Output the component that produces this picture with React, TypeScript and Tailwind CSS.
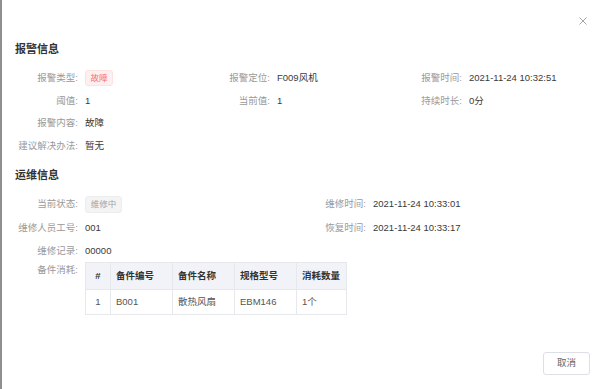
import React from "react";

interface Field {
  label: string;
  value: React.ReactNode;
}

const font = { fontFamily: '"Liberation Sans", Arial, "Noto Sans CJK SC", sans-serif' };

const FaultTag = () => (
  <span className="inline-flex h-[16px] w-[28px] items-center justify-center rounded-[3px] border border-[#fde2e2] bg-[#fef0f0] text-[8.5px] text-[#f56c6c]">
    故障
  </span>
);

const StatusTag = () => (
  <span className="inline-flex h-[17px] w-[37px] items-center justify-center rounded-[3px] border border-[#ebedf0] bg-[#f4f4f5] text-[8.5px] text-[#a0a3a8]">
    维修中
  </span>
);

const FieldCell = ({ label, value }: Field) => (
  <div className="flex items-center">
    <span className="w-[63px] shrink-0 whitespace-nowrap text-right text-[#9a9a9a]">{label}:</span>
    <span className="ml-[7px] whitespace-nowrap text-[#3a3a3a]">{value}</span>
  </div>
);

const parts = [
  { no: "1", code: "B001", name: "散热风扇", spec: "EBM146", qty: "1个" },
];

const PartsTable = () => (
  <table className="border-collapse text-[9.5px]">
    <thead>
      <tr className="h-[27px] bg-[#f1f3f8] text-[#333]">
        <th className="w-[25px] border border-[#e6e8ec] text-center font-bold">#</th>
        <th className="w-[62px] border border-[#e6e8ec] pl-[5px] text-left font-bold">备件编号</th>
        <th className="w-[62px] border border-[#e6e8ec] pl-[5px] text-left font-bold">备件名称</th>
        <th className="w-[62px] border border-[#e6e8ec] pl-[5px] text-left font-bold">规格型号</th>
        <th className="w-[50px] border border-[#e6e8ec] pl-[5px] text-left font-bold">消耗数量</th>
      </tr>
    </thead>
    <tbody>
      {parts.map((p) => (
        <tr key={p.no} className="h-[25px] text-[#555]">
          <td className="border border-[#e6e8ec] text-center">{p.no}</td>
          <td className="border border-[#e6e8ec] pl-[5px]">{p.code}</td>
          <td className="border border-[#e6e8ec] pl-[5px]">{p.name}</td>
          <td className="border border-[#e6e8ec] pl-[5px]">{p.spec}</td>
          <td className="border border-[#e6e8ec] pl-[5px]">{p.qty}</td>
        </tr>
      ))}
    </tbody>
  </table>
);

export default function App() {
  return (
    <div className="flex h-[389px] w-[600px] bg-white text-[9.5px]" style={font}>
      <div className="w-[2px] shrink-0 bg-[#8f8f8f]" />
      <div className="relative flex flex-1 flex-col pl-[13px]">
        {/* close */}
        <button className="absolute right-[13px] top-[16px] flex h-[9px] w-[9px] items-center justify-center">
          <svg width="8" height="8" viewBox="0 0 8 8" fill="none" stroke="#a6a6a6" strokeWidth="1">
            <path d="M0.5 0.5 L7.5 7.5 M7.5 0.5 L0.5 7.5" />
          </svg>
        </button>

        {/* 报警信息 */}
        <h2 className="mt-[41px] h-[16px] text-[11px] font-bold leading-[16px] text-[#333]">报警信息</h2>
        <div className="mt-[9px] grid w-[576px] grid-cols-3">
          <div className="flex h-[24px] items-center"><FieldCell label="报警类型" value={<FaultTag />} /></div>
          <div className="flex h-[24px] items-center"><FieldCell label="报警定位" value="F009风机" /></div>
          <div className="flex h-[24px] items-center"><FieldCell label="报警时间" value="2021-11-24 10:32:51" /></div>
          <div className="flex h-[22px] items-center"><FieldCell label="阈值" value="1" /></div>
          <div className="flex h-[22px] items-center"><FieldCell label="当前值" value="1" /></div>
          <div className="flex h-[22px] items-center"><FieldCell label="持续时长" value="0分" /></div>
          <div className="col-span-3 flex h-[23px] items-center"><FieldCell label="报警内容" value="故障" /></div>
          <div className="col-span-3 flex h-[23px] items-center"><FieldCell label="建议解决办法" value="暂无" /></div>
        </div>

        {/* 运维信息 */}
        <h2 className="mt-[9px] h-[16px] text-[11px] font-bold leading-[16px] text-[#333]">运维信息</h2>
        <div className="mt-[9px] grid w-[576px] grid-cols-2">
          <div className="flex h-[24px] items-center"><FieldCell label="当前状态" value={<StatusTag />} /></div>
          <div className="flex h-[24px] items-center"><FieldCell label="维修时间" value="2021-11-24 10:33:01" /></div>
          <div className="flex h-[24px] items-center"><FieldCell label="维修人员工号" value="001" /></div>
          <div className="flex h-[24px] items-center"><FieldCell label="恢复时间" value="2021-11-24 10:33:17" /></div>
          <div className="col-span-2 flex h-[22px] items-center"><FieldCell label="维修记录" value="00000" /></div>
        </div>
        <div className="flex items-start">
          <span className="mt-[1px] w-[63px] shrink-0 text-right leading-[14px] text-[#9a9a9a]">备件消耗:</span>
          <div className="ml-[7px]">
            <PartsTable />
          </div>
        </div>

        <div className="mt-auto flex justify-end pb-[14px] pr-[10px]">
          <button className="h-[23px] w-[47px] rounded-[3px] border border-[#dcdfe6] bg-white text-[9.5px] text-[#666]">
            取消
          </button>
        </div>
      </div>
    </div>
  );
}
